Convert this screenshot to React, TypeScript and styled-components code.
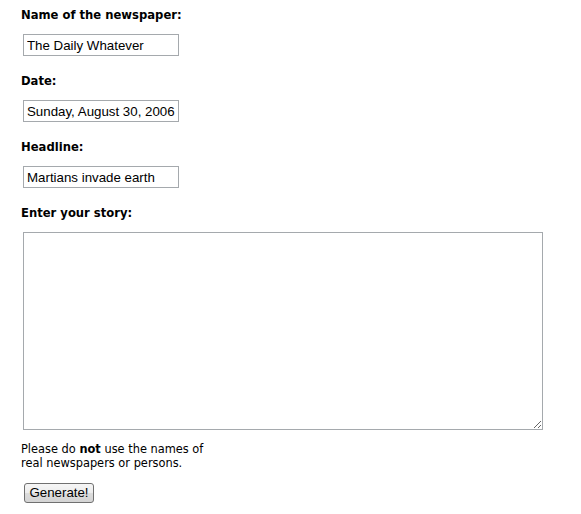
import React from "react";
import styled, { createGlobalStyle } from "styled-components";

const Global = createGlobalStyle`
  html, body { margin: 0; padding: 0; background: #ffffff; }
  body { font-family: "DejaVu Sans", Verdana, sans-serif; color: #000; }
`;

const Form = styled.form`
  display: flex;
  flex-direction: column;
  align-items: flex-start;
  padding: 8px 0 0 21px;
`;

const Field = styled.div`
  display: flex;
  flex-direction: column;
  align-items: flex-start;
  margin-bottom: 18px;
`;

const Label = styled.label`
  font-family: "DejaVu Sans", Verdana, sans-serif;
  font-weight: bold;
  font-size: 11.6px;
  line-height: 14px;
  margin-bottom: 12px;
  white-space: nowrap;
`;

const TextInput = styled.input`
  box-sizing: border-box;
  width: 156px;
  height: 22px;
  margin: 0 0 0 2px;
  padding: 1px 3px 0 3px;
  border: 1px solid #a5a9ad;
  font-family: "Liberation Sans", Arial, sans-serif;
  font-size: 13.3px;
  color: #000;
  background: #fff;
  outline: none;
`;

const StoryArea = styled.textarea`
  box-sizing: border-box;
  width: 520px;
  height: 198px;
  margin: 0 0 0 2px;
  padding: 2px;
  border: 1px solid #a5a9ad;
  font-family: "Liberation Sans", Arial, sans-serif;
  font-size: 13px;
  resize: both;
  outline: none;
`;

const StoryField = styled(Field)`
  margin-bottom: 12px;
`;

const Note = styled.p`
  margin: 0 0 13px 0;
  width: 195px;
  font-family: "DejaVu Sans", Verdana, sans-serif;
  font-size: 11.4px;
  line-height: 14px;
  color: #000;

  b {
    font-weight: bold;
  }
`;

const Button = styled.button`
  box-sizing: border-box;
  width: 70px;
  height: 20px;
  margin-left: 3px;
  padding: 0;
  border: 1px solid #707070;
  border-radius: 3px;
  background: linear-gradient(#f6f6f6 0%, #ececec 50%, #dcdcdc 51%, #d4d4d4 100%);
  font-family: "Liberation Sans", Arial, sans-serif;
  font-size: 13.3px;
  color: #000;
  line-height: 18px;
`;

export default function App() {
  return (
    <>
      <Global />
      <Form onSubmit={(e) => e.preventDefault()}>
        <Field>
          <Label htmlFor="paper">Name of the newspaper:</Label>
          <TextInput id="paper" defaultValue="The Daily Whatever" />
        </Field>
        <Field>
          <Label htmlFor="date">Date:</Label>
          <TextInput id="date" defaultValue="Sunday, August 30, 2006" />
        </Field>
        <Field>
          <Label htmlFor="headline">Headline:</Label>
          <TextInput id="headline" defaultValue="Martians invade earth" />
        </Field>
        <StoryField>
          <Label htmlFor="story">Enter your story:</Label>
          <StoryArea id="story" />
        </StoryField>
        <Note>
          Please do <b>not</b> use the names of real newspapers or persons.
        </Note>
        <Button type="submit">Generate!</Button>
      </Form>
    </>
  );
}
